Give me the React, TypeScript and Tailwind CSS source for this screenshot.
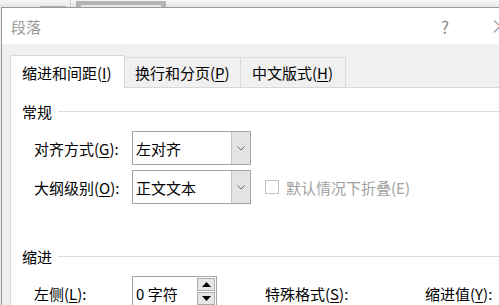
import React from 'react';

const font = { fontFamily: '"Noto Sans CJK SC", "Noto Sans", sans-serif' };

function Key({ k }: { k: string }) {
  return (
    <>
      (<span className="underline underline-offset-2 decoration-1">{k}</span>)
    </>
  );
}

function Chevron() {
  return (
    <svg width="8" height="5" viewBox="0 0 8 5" className="text-[#6a6a6a]">
      <path d="M0.5 0.5 L4 4 L7.5 0.5" fill="none" stroke="currentColor" strokeWidth="1" />
    </svg>
  );
}

function Select({ value }: { value: string }) {
  return (
    <div className="flex h-[34px] w-[119px] border border-[#a5a5a5] bg-white">
      <div className="flex flex-1 items-center pl-[3px] text-[15px] leading-none text-black">{value}</div>
      <div className="flex w-[19px] items-center justify-center border-l border-[#c4c4c4] bg-[#e3e3e3]">
        <Chevron />
      </div>
    </div>
  );
}

function Spinner({ value }: { value: string }) {
  return (
    <div className="flex h-[34px] w-[85px] border border-[#a5a5a5] bg-white">
      <div className="flex flex-1 items-center pl-[3px] text-[15px] leading-none text-black">{value}</div>
      <div className="flex w-[20px] flex-col gap-[1px] p-[1px]">
        <div className="flex h-[13px] items-center justify-center border border-[#adadad] bg-[#e6e6e6]">
          <svg width="9" height="5" viewBox="0 0 9 5"><path d="M4.5 0 L9 5 L0 5 Z" fill="#000" /></svg>
        </div>
        <div className="flex h-[13px] items-center justify-center border border-[#adadad] bg-[#e6e6e6]">
          <svg width="9" height="5" viewBox="0 0 9 5"><path d="M0 0 L9 0 L4.5 5 Z" fill="#000" /></svg>
        </div>
      </div>
    </div>
  );
}

function Heading({ text }: { text: string }) {
  return (
    <div className="flex h-[20px] items-center gap-[6px] pr-2">
      <span className="text-[15px] leading-none text-black">{text}</span>
      <div className="h-px flex-1 bg-[#dcdcdc]" />
    </div>
  );
}

export default function App() {
  return (
    <div className="h-[305px] w-[499px] overflow-hidden bg-[#ececec]" style={font}>
      {/* windows behind the dialog */}
      <div className="flex h-[7px] items-end bg-gradient-to-b from-[#f5f5f5] to-[#e6e6e6]">
        <div className="w-[40px]" />
        <div className="h-[1px] w-[26px] bg-[#b0b0b0]" />
        <div className="ml-[4px] h-[7px] w-px bg-[#d0d0d0]" />
        <div className="ml-[5px] flex h-[6px] w-[90px] items-end justify-center bg-[#b5b5b5]">
          <div className="h-[2px] w-[80px] bg-[#e8e8e8]" />
        </div>
      </div>

      <div className="ml-[1px] w-[540px] border-l border-t border-[#9a9a9a]">
        {/* title bar */}
        <div className="flex h-[36px] items-center bg-white pl-[9px]">
          <span className="text-[15px] leading-none text-[#999999]">段落</span>
          <span className="ml-[400px] text-[17px] leading-none text-[#8a8a8a]">?</span>
          <span className="ml-[41px] text-[20px] font-light leading-none text-[#8a8a8a]">×</span>
        </div>

        {/* body */}
        <div className="bg-[#f0f0f0] pl-[8px] pt-[11px]">
          <div className="flex items-end">
            <div className="relative z-10 -mb-px flex h-[33px] w-[115px] items-center border border-b-0 border-[#d9d9d9] bg-white pl-[11px] text-[15px] leading-none text-black">
              缩进和间距<Key k="I" />
            </div>
            <div className="flex h-[30px] w-[116px] items-center border border-l-0 border-b-0 border-[#d9d9d9] pl-[10px] text-[15px] leading-none text-black">
              换行和分页<Key k="P" />
            </div>
            <div className="flex h-[30px] w-[105px] items-center border border-l-0 border-b-0 border-[#d9d9d9] pl-[11px] text-[15px] leading-none text-black">
              中文版式<Key k="H" />
            </div>
          </div>

          <div className="h-[240px] border border-[#d9d9d9] bg-white pl-[11px] pt-[13px]">
            <Heading text="常规" />

            <div className="mt-[10px] flex items-center">
              <span className="w-[110px] pl-[12px] text-[15px] leading-none text-black">
                对齐方式<Key k="G" />:
              </span>
              <Select value="左对齐" />
            </div>

            <div className="mt-[5px] flex items-center">
              <span className="w-[110px] pl-[12px] text-[15px] leading-none text-black">
                大纲级别<Key k="O" />:
              </span>
              <Select value="正文文本" />
              <div className="ml-[14px] h-[14px] w-[14px] border border-[#c2c2c2] bg-white" />
              <span className="ml-[7px] text-[15px] leading-none text-[#a0a0a0]">默认情况下折叠(E)</span>
            </div>

            <div className="mt-[42px]">
              <Heading text="缩进" />
            </div>

            <div className="mt-[10px] flex items-center">
              <span className="w-[110px] pl-[12px] text-[15px] leading-none text-black">
                左侧<Key k="L" />:
              </span>
              <Spinner value="0 字符" />
              <span className="ml-[48px] w-[160px] text-[15px] leading-none text-black">
                特殊格式<Key k="S" />:
              </span>
              <span className="text-[15px] leading-none text-black">
                缩进值<Key k="Y" />:
              </span>
            </div>
          </div>
        </div>
      </div>
    </div>
  );
}
